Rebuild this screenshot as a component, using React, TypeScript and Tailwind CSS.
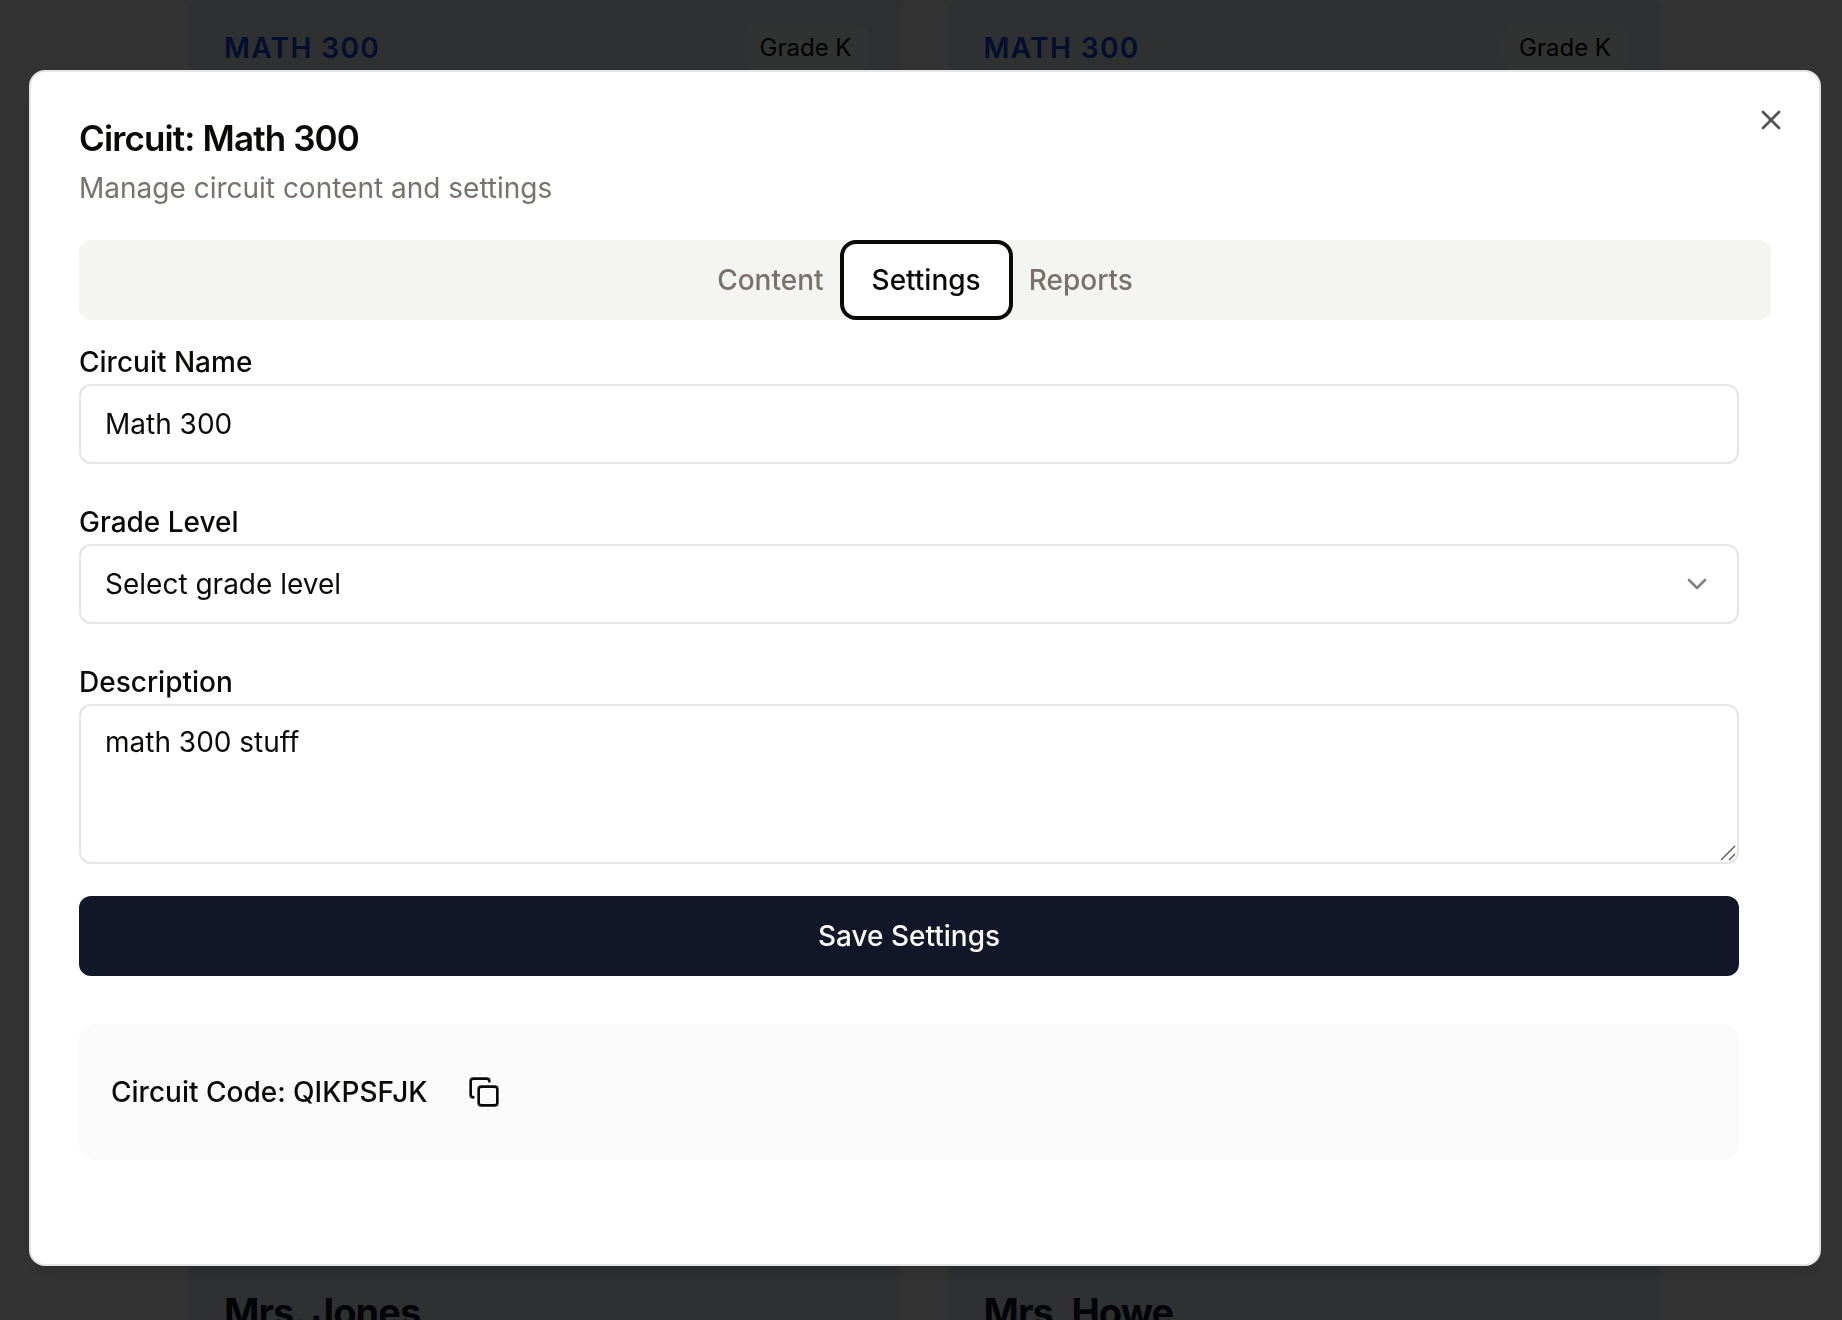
import { useState } from "react";
import { ChevronDown, Copy, X } from "lucide-react";

const circuits = [
  { code: "MATH 300", grade: "Grade K", teacher: "Mrs. Jones" },
  { code: "MATH 300", grade: "Grade K", teacher: "Mrs. Howe" },
];

const tabs = ["Content", "Settings", "Reports"];

function CircuitCard({ code, grade, teacher }: (typeof circuits)[number]) {
  return (
    <article className="-mt-2 rounded-2xl bg-[#ebf0fa] px-[34px] pt-8 pb-16 shadow-sm">
      <div className="flex items-center justify-between">
        <span className="text-[28px] leading-10 font-semibold tracking-wider text-blue-700">{code}</span>
        <span className="rounded-xl bg-green-50 px-4 py-1 text-[24px] leading-10 text-black">{grade}</span>
      </div>
      <h2 className="mt-[1216px] text-[38px] leading-12 font-bold tracking-tight text-slate-900">{teacher}</h2>
    </article>
  );
}

export default function App() {
  const [active, setActive] = useState("Settings");

  return (
    <div className="h-screen overflow-hidden bg-[#fffefc] font-['Inter',sans-serif] text-stone-950">
      <main className="grid grid-cols-2 gap-12 pr-[181px] pl-[190px]">
        {circuits.map((circuit) => (
          <CircuitCard key={circuit.teacher} {...circuit} />
        ))}
      </main>

      <div className="fixed inset-0 flex items-center justify-center bg-black/80 pt-4 pl-2">
        <section
          role="dialog"
          aria-labelledby="dialog-title"
          className="relative w-full max-w-[1792px] rounded-2xl border-2 border-[#e5e5e5] bg-white p-12 shadow-lg"
        >
          <header className="flex flex-col gap-3">
            <h1 id="dialog-title" className="text-[35px] leading-9 font-semibold tracking-tight">
              Circuit: Math 300
            </h1>
            <p className="text-[28px] leading-10 text-stone-500">Manage circuit content and settings</p>
          </header>

          <div role="tablist" className="mt-8 flex h-20 items-center justify-center rounded-xl bg-[#f4f4f3] p-2">
            {tabs.map((tab) => (
              <button
                key={tab}
                type="button"
                role="tab"
                aria-selected={tab === active}
                onClick={() => setActive(tab)}
                className={
                  tab === active
                    ? "h-16 rounded-lg bg-white px-6 text-[28px] leading-10 font-medium ring-4 ring-stone-950 ring-offset-4 ring-offset-white outline-none"
                    : "h-16 rounded-lg px-6 text-[28px] leading-10 font-medium text-stone-500 outline-none"
                }
              >
                {tab}
              </button>
            ))}
          </div>

          <div className="mt-7 pr-8 pb-14">
            <form className="flex flex-col" onSubmit={(event) => event.preventDefault()}>
              <label htmlFor="circuit-name" className="text-[28px] leading-7 font-medium">
                Circuit Name
              </label>
              <input
                id="circuit-name"
                type="text"
                defaultValue="Math 300"
                className="mt-2 h-20 rounded-xl border-2 border-[#e5e5e5] bg-white px-6 text-[28px] leading-10 outline-none"
              />

              <label htmlFor="grade-level" className="mt-11 text-[28px] leading-7 font-medium">
                Grade Level
              </label>
              <div className="relative mt-2">
                <select
                  id="grade-level"
                  defaultValue=""
                  className="h-20 w-full appearance-none rounded-xl border-2 border-[#e5e5e5] bg-white px-6 text-[28px] leading-10 outline-none"
                >
                  <option value="">Select grade level</option>
                  <option value="K">Grade K</option>
                </select>
                <ChevronDown className="pointer-events-none absolute top-6 right-[26px] size-8 opacity-50" />
              </div>

              <label htmlFor="description" className="mt-11 text-[28px] leading-7 font-medium">
                Description
              </label>
              <div className="relative mt-2 flex">
                <textarea
                  id="description"
                  defaultValue="math 300 stuff"
                  className="h-40 w-full resize-y rounded-xl border-2 border-[#e5e5e5] bg-white px-6 py-4 text-[28px] leading-10 outline-none [&::-webkit-resizer]:bg-transparent"
                />
                <svg
                  viewBox="0 0 16 16"
                  className="pointer-events-none absolute right-[3px] bottom-[3px] size-4 stroke-stone-600"
                  fill="none"
                  strokeWidth="1.3"
                  aria-hidden="true"
                >
                  <path d="M1 15 15 1M9 15l6-6" />
                </svg>
              </div>

              <button
                type="submit"
                className="mt-8 h-20 rounded-xl bg-[#111729] text-[28px] leading-10 font-medium text-stone-50"
              >
                Save Settings
              </button>
            </form>

            <div className="mt-12 flex items-center gap-4 rounded-2xl bg-[#fafafa] p-8">
              <span className="text-[28px] leading-10 font-medium">Circuit Code: QIKPSFJK</span>
              <button type="button" aria-label="Copy circuit code" className="flex h-18 items-center px-6">
                <Copy className="size-8" />
              </button>
            </div>
          </div>

          <button type="button" aria-label="Close" className="absolute top-8 right-8 opacity-70">
            <X className="size-8" />
          </button>
        </section>
      </div>
    </div>
  );
}
